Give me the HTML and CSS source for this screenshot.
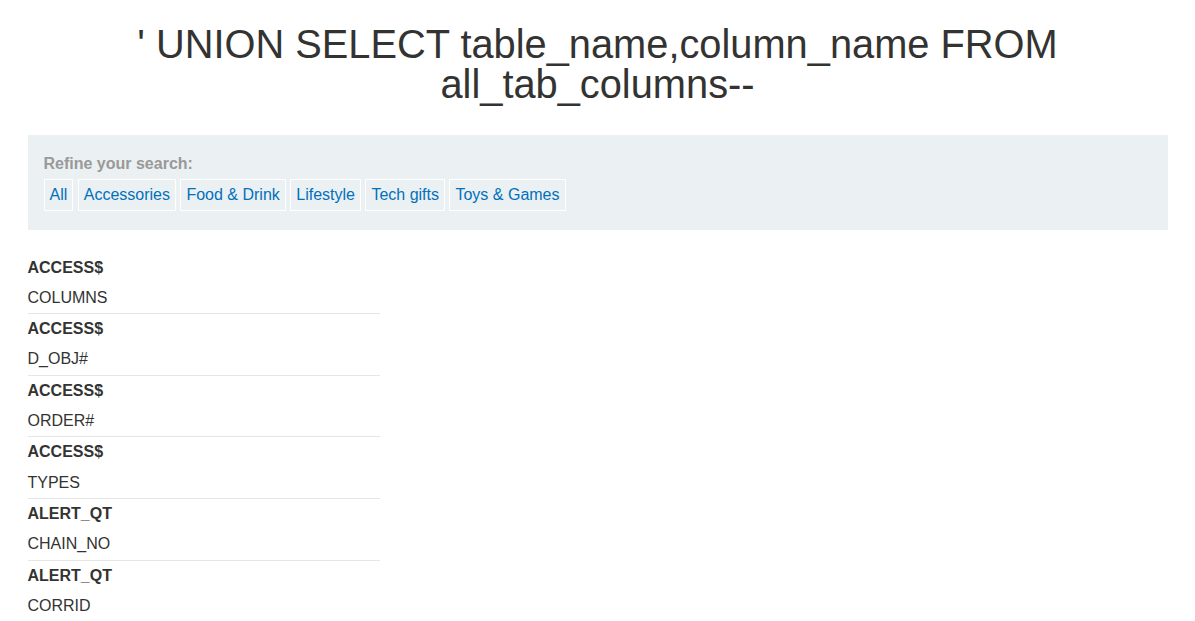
FILE: index.html
```html
<!DOCTYPE html>
<html>
<head>
<meta charset="utf-8">
<link rel="stylesheet" href="styles.css">
</head>
<body>
<div class="container">
  <h1 class="title">' UNION SELECT table_name,column_name FROM all_tab_columns--</h1>
  <section class="filter">
    <div class="filter-label">Refine your search:</div>
    <div class="filter-links">
      <a class="filter-btn">All</a>
      <a class="filter-btn">Accessories</a>
      <a class="filter-btn">Food &amp; Drink</a>
      <a class="filter-btn">Lifestyle</a>
      <a class="filter-btn">Tech gifts</a>
      <a class="filter-btn">Toys &amp; Games</a>
    </div>
  </section>
  <div class="results">
    <div class="entry"><div class="entry-head">ACCESS$</div><div class="entry-body">COLUMNS</div></div>
    <div class="entry"><div class="entry-head">ACCESS$</div><div class="entry-body">D_OBJ#</div></div>
    <div class="entry"><div class="entry-head">ACCESS$</div><div class="entry-body">ORDER#</div></div>
    <div class="entry"><div class="entry-head">ACCESS$</div><div class="entry-body">TYPES</div></div>
    <div class="entry"><div class="entry-head">ALERT_QT</div><div class="entry-body">CHAIN_NO</div></div>
    <div class="entry"><div class="entry-head">ALERT_QT</div><div class="entry-body">CORRID</div></div>
  </div>
</div>
</body>
</html>
```
FILE: styles.css
```css
html, body {
  margin: 0;
  padding: 0;
  background: #ffffff;
}
body {
  font-family: "Liberation Sans", Arial, sans-serif;
  color: #333332;
  font-size: 16px;
}
.container {
  width: 1140px;
  margin: 0 auto;
}
.title {
  font-weight: normal;
  font-size: 39.8px;
  line-height: 40px;
  text-align: center;
  margin: 0;
  padding: 24px 80px 31px;
}
.filter {
  background: #ebf0f2;
  padding: 19px 16px 19px 16px;
}
.filter-label {
  color: #999999;
  font-weight: bold;
  line-height: 20px;
  margin-bottom: 5px;
}
.filter-links {
  line-height: 32px;
  height: 32px;
}
.filter-btn {
  display: inline-block;
  border: 1px solid #ffffff;
  color: #0071bc;
  padding: 0 5px;
  line-height: 30px;
  text-decoration: none;
  vertical-align: top;
}
.results {
  width: 352px;
  margin-top: 22.5px;
}
.entry {
  border-bottom: 1px solid #e6e6e6;
}
.entry:last-child {
  border-bottom: none;
}
.entry-head {
  font-weight: bold;
  line-height: 30.33px;
}
.entry-body {
  line-height: 30.33px;
}
```
